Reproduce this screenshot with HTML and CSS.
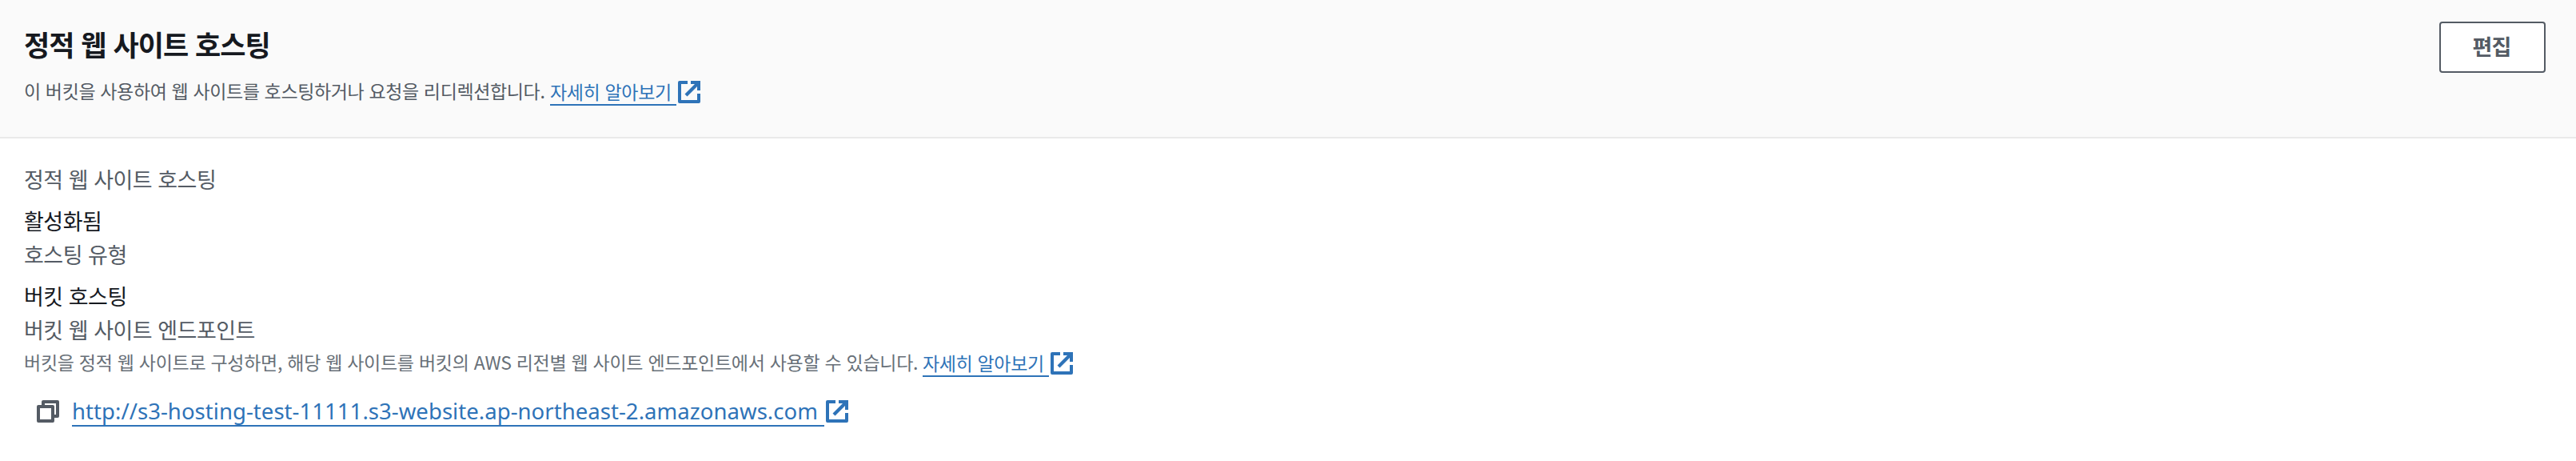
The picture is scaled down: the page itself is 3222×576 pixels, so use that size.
FILE: index.html
```
<!DOCTYPE html>
<html lang="ko">
<head>
<meta charset="utf-8">
<title>정적 웹 사이트 호스팅</title>
<link rel="stylesheet" href="styles.css">
</head>
<body>
<svg class="defs" width="0" height="0" aria-hidden="true">
  <symbol id="external" viewBox="0 0 28 28">
    <path d="M12 2H2V26H26V16" fill="none" stroke="currentColor" stroke-width="4" stroke-linejoin="round"/>
    <path d="M16 0H28V12H24V7L11.5 19.5L8.5 16.5L21 4H16Z" fill="currentColor"/>
  </symbol>
  <symbol id="copy" viewBox="0 0 28 28">
    <path d="M8 6V2H26V20H22M2 8H20V26H2Z" fill="none" stroke="currentColor" stroke-width="4" stroke-linejoin="round"/>
  </symbol>
</svg>
<section class="panel">
  <header class="header">
    <div class="heading">
      <h2 class="title">정적 웹 사이트 호스팅</h2>
      <p class="small description"><span class="copy-text">이 버킷을 사용하여 웹 사이트를 호스팅하거나 요청을 리디렉션합니다.</span><a class="link learn" href="#">자세히 알아보기</a><svg class="icon"><use href="#external"/></svg></p>
    </div>
    <button class="button" type="button">편집</button>
  </header>
  <div class="content">
    <div class="label">정적 웹 사이트 호스팅</div>
    <div class="value">활성화됨</div>
    <div class="label">호스팅 유형</div>
    <div class="value">버킷 호스팅</div>
    <div class="label endpoint">버킷 웹 사이트 엔드포인트</div>
    <p class="small hint"><span class="copy-text">버킷을 정적 웹 사이트로 구성하면, 해당 웹 사이트를 버킷의 AWS 리전별 웹 사이트 엔드포인트에서 사용할 수 있습니다.</span><a class="link learn" href="#">자세히 알아보기</a><svg class="icon"><use href="#external"/></svg></p>
    <div class="url-row"><svg class="icon copy"><use href="#copy"/></svg><a class="link url" href="#">http://s3-hosting-test-11111.s3-website.ap-northeast-2.amazonaws.com</a><svg class="icon"><use href="#external"/></svg></div>
  </div>
</section>
</body>
</html>
```
FILE: styles.css
```
* { box-sizing: border-box; }
body {
  margin: 0;
  background: #fff;
  color: #16191f;
  font-family: "Noto Sans CJK KR", sans-serif;
  font-size: 27px;
  line-height: 42px;
  letter-spacing: -0.5px;
}
.defs { display: block; }
.panel { height: 576px; overflow: hidden; white-space: nowrap; }
.header {
  display: flex;
  justify-content: space-between;
  height: 173px;
  padding: 27px 38px 0 30px;
  background: #fafafa;
  border-bottom: 2px solid #eaeaea;
}
.title {
  margin: 3px 0 0;
  font-size: 35px;
  font-weight: 700;
  line-height: 50px;
  letter-spacing: -0.95px;
}
.small {
  display: flex;
  align-items: center;
  height: 36px;
  margin: 0;
  font-size: 23px;
  line-height: 32px;
  letter-spacing: -0.35px;
}
.copy-text { padding-bottom: 4px; }
.description { margin-top: 17px; color: #545b64; }
.description .copy-text { width: 658px; letter-spacing: -0.37px; }
.link {
  color: #2e73b8;
  text-decoration: none;
  border-bottom: 2px solid #2e73b8;
}
.learn { width: 158px; height: 34px; }
.icon {
  flex: none;
  width: 28px;
  height: 28px;
  margin-left: 2px;
  color: #2e73b8;
}
.button {
  width: 133px;
  height: 64px;
  padding: 0 2px 3px 0;
  border: 2px solid #545b64;
  border-radius: 4px;
  background: #fff;
  color: #545b64;
  font: 700 27px/42px "Noto Sans CJK KR", sans-serif;
  letter-spacing: -0.8px;
}
.content { padding: 30px 30px 0; }
.label { margin-bottom: 10px; color: #545b64; }
.endpoint { margin-bottom: 3px; }
.hint { color: #687078; }
.hint .copy-text { width: 1124px; letter-spacing: -0.28px; }
.url-row { display: flex; align-items: center; margin-top: 23px; padding-left: 16px; }
.icon.copy { margin: 0 16px 0 0; color: #545b64; }
.url {
  width: 941px;
  height: 38px;
  font-family: "Noto Sans", sans-serif;
  font-size: 27.5px;
  line-height: 38px;
  letter-spacing: 0.05px;
}
```
